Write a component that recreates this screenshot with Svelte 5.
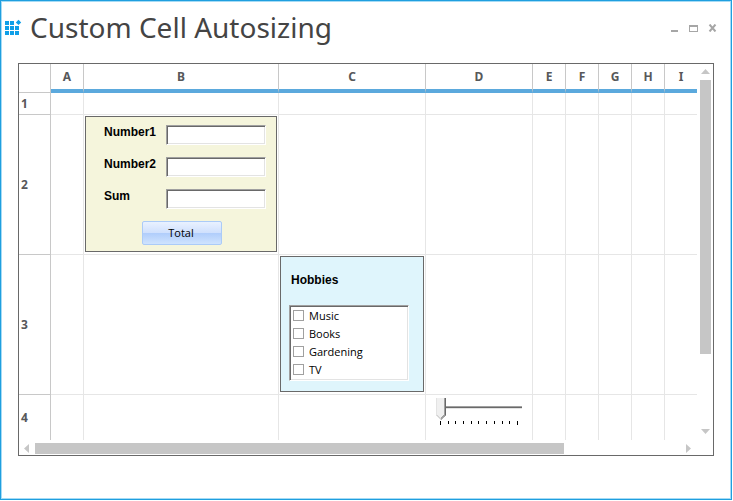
<script>
  const columns = ['A', 'B', 'C', 'D', 'E', 'F', 'G', 'H', 'I'];
  const rows = [1, 2, 3, 4];
  const hobbyNames = ['Music', 'Books', 'Gardening', 'TV'];

  let number1 = $state('');
  let number2 = $state('');
  let sum = $state('');
  let level = $state(0);

  function total() {
    sum = String(Number(number1) + Number(number2));
  }
</script>

<main class="window">
  <header class="titlebar">
    <svg class="logo" width="16" height="16" viewBox="0 0 16 16" aria-hidden="true">
      <g fill="#0f9fe8">
        <rect x="0" y="1" width="4" height="4" /><rect x="5" y="1" width="4" height="4" />
        <rect x="0" y="6" width="4" height="4" /><rect x="5" y="6" width="4" height="4" /><rect x="10" y="6" width="4" height="4" />
        <rect x="0" y="11" width="4" height="4" /><rect x="5" y="11" width="4" height="4" /><rect x="10" y="11" width="4" height="4" />
        <path d="M13.5 -0.3l2.7 2.7l-2.7 2.7l-2.7-2.7z" />
      </g>
    </svg>
    <h1>Custom Cell Autosizing</h1>
    <div class="controls">
      <button aria-label="Minimize">
        <svg width="9" height="8" viewBox="0 0 9 8" shape-rendering="crispEdges"><path d="M1 6h7v2h-7z" fill="#a6a6a6" /></svg>
      </button>
      <button aria-label="Maximize">
        <svg width="9" height="8" viewBox="0 0 9 8" shape-rendering="crispEdges"><path d="M0 1h9v7h-9zM1 3v4h7v-4z" fill="#a6a6a6" fill-rule="evenodd" /></svg>
      </button>
      <button aria-label="Close">
        <svg width="9" height="8" viewBox="0 0 9 8"><path d="M1.5 0.5l6 7M7.5 0.5l-6 7" stroke="#a6a6a6" stroke-width="2" /></svg>
      </button>
    </div>
  </header>

  <section class="sheet">
    <table>
      <colgroup>
        <col class="c-head" />
        {#each columns as c}
          <col class="c-{c}" />
        {/each}
      </colgroup>
      <thead>
        <tr>
          <th class="corner"></th>
          {#each columns as c}
            <th scope="col">{c}</th>
          {/each}
        </tr>
      </thead>
      <tbody>
        {#each rows as r}
          <tr class="r{r}">
            <th scope="row">{r}</th>
            {#each columns as c}
              <td>
                {#if r === 2 && c === 'B'}
                  <div class="panel adder">
                    <div class="fields">
                      <label for="n1">Number1</label><input id="n1" type="text" bind:value={number1} />
                      <label for="n2">Number2</label><input id="n2" type="text" bind:value={number2} />
                      <label for="sum">Sum</label><input id="sum" type="text" bind:value={sum} />
                    </div>
                    <button class="total" onclick={total}>Total</button>
                  </div>
                {:else if r === 3 && c === 'C'}
                  <div class="panel hobbies">
                    <h2>Hobbies</h2>
                    <div class="list">
                      {#each hobbyNames as name}
                        <label><input type="checkbox" />{name}</label>
                      {/each}
                    </div>
                  </div>
                {:else if r === 4 && c === 'D'}
                  <div class="slider">
                    <input type="range" min="0" max="10" bind:value={level} aria-label="Level" />
                    <div class="ticks">
                      {#each Array(11) as _}<i></i>{/each}
                    </div>
                  </div>
                {/if}
              </td>
            {/each}
          </tr>
        {/each}
      </tbody>
    </table>
    <div class="vbar">
      <svg width="9" height="5" viewBox="0 0 9 5" aria-hidden="true"><path d="M0 5l4.5-5l4.5 5z" fill="#c6c6c6" /></svg>
      <div class="track"><div class="thumb"></div></div>
      <svg width="9" height="5" viewBox="0 0 9 5" aria-hidden="true"><path d="M0 0l4.5 5l4.5-5z" fill="#c6c6c6" /></svg>
    </div>
    <div class="hbar">
      <svg width="5" height="9" viewBox="0 0 5 9" aria-hidden="true"><path d="M5 0l-5 4.5l5 4.5z" fill="#c6c6c6" /></svg>
      <div class="track"><div class="thumb"></div></div>
      <svg width="5" height="9" viewBox="0 0 5 9" aria-hidden="true"><path d="M0 0l5 4.5l-5 4.5z" fill="#c6c6c6" /></svg>
    </div>
  </section>
</main>

<style>
  :global(body) {
    background: #fff;
  }

  .window {
    box-sizing: border-box;
    min-height: calc(100vh - 1px);
    margin-right: 1px;
    padding-bottom: 42px;
    border: 1px solid #1f9fdf;
    box-shadow: inset 0 0 0 1px #a5dbf5;
    font-family: "Open Sans", "Noto Sans", sans-serif;
    font-size: 11px;
    color: #000;
  }

  .titlebar {
    display: flex;
    align-items: center;
    height: 54px;
    padding: 0 14px 0 4px;
  }

  .logo {
    flex: none;
    margin-right: 9px;
    overflow: visible;
  }

  h1 {
    flex: 1;
    margin: 0;
    font: 28px/52px "Noto Sans", "Open Sans", sans-serif;
    padding-bottom: 2px;
    color: #444;
    white-space: nowrap;
  }

  .controls {
    display: flex;
    gap: 10px;
  }

  .controls button {
    display: block;
    padding: 0;
    border: 0;
    background: none;
  }

  .controls svg,
  .vbar svg,
  .hbar svg {
    display: block;
    flex: none;
  }

  .sheet {
    display: grid;
    grid-template-columns: 1fr 16px;
    margin: 8px 17px 0;
    border: 1px solid #696969;
  }

  table {
    width: 100%;
    table-layout: fixed;
    border-collapse: separate;
    border-spacing: 0;
  }

  .c-head { width: 32px; }
  .c-B { width: 195px; }
  .c-C { width: 147px; }
  .c-D { width: 107px; }
  .c-A, .c-E, .c-F, .c-G, .c-H { width: 33px; }

  th,
  td {
    box-sizing: border-box;
    padding: 0;
    border: 0 solid #e6e6e6;
    border-width: 0 1px 1px 0;
    vertical-align: top;
  }

  tr > :last-child {
    border-right: 0;
  }

  tbody tr:last-child > * {
    border-bottom: 0;
  }

  th {
    font: bold 12px/16px "Noto Sans", sans-serif;
    color: #57585a;
    border-color: #c8c8c8;
  }

  thead th {
    height: 29px;
    border-bottom: 4px solid #5ba9dd;
    vertical-align: middle;
  }

  thead .corner {
    border-bottom: 1px solid #c8c8c8;
  }

  tbody th {
    padding-left: 2px;
    text-align: left;
    vertical-align: middle;
  }

  .r1 > * { height: 22px; }
  .r2 > *, .r3 > * { height: 140px; }
  .r4 > * { height: 45px; }

  .panel {
    box-sizing: border-box;
    height: 136px;
    margin: 1px;
    border: 1px solid #696969;
  }

  .adder {
    padding: 8px 10px 0 18px;
    background: #f5f5dc;
  }

  .fields {
    display: grid;
    grid-template-columns: 62px 100px;
    row-gap: 12px;
  }

  .fields label,
  h2 {
    margin: 0;
    font: bold 12px/14px "Liberation Sans", sans-serif;
  }

  .fields input,
  .list {
    box-sizing: border-box;
    border: 1px solid;
    border-color: #a0a0a0 #fff #fff #a0a0a0;
    background: #fff;
    box-shadow: inset 1px 1px #696969, inset -1px -1px #e3e3e3;
  }

  .fields input {
    width: 100%;
    height: 20px;
    padding: 2px 4px;
    font: 11px "Open Sans", sans-serif;
  }

  .total {
    display: block;
    width: 80px;
    height: 24px;
    margin: 12px 0 0 38px;
    padding: 0 2px 2px 0;
    border: 1px solid #abcbf8;
    border-radius: 2px;
    background: linear-gradient(#e9f1ff, #cfe0fd 50%, #b0cdfb 51%, #cfe3fe);
    font: 11px "Open Sans", sans-serif;
    color: #000;
  }

  .hobbies {
    padding: 16px 14px 0 8px;
    background: #dff5fc;
  }

  h2 {
    padding-left: 2px;
  }

  .list {
    width: 120px;
    height: 76px;
    margin-top: 18px;
    padding: 0 3px;
  }

  .list label {
    display: flex;
    align-items: center;
    gap: 5px;
    height: 18px;
  }

  .list input {
    appearance: none;
    box-sizing: border-box;
    width: 11px;
    height: 11px;
    margin: 0;
    border: 1px solid #a0a0a0;
    background: #fff;
  }

  .list input:checked {
    background: #696969;
  }

  .slider {
    width: 88px;
    padding: 3px 0 0 10px;
  }

  .slider input {
    appearance: none;
    display: block;
    width: 100%;
    height: 22px;
    margin: 0;
    background: none;
  }

  .slider input::-webkit-slider-runnable-track {
    height: 22px;
    background: linear-gradient(#a0a0a0 0 1px, #696969 1px 2px, #e3e3e3 2px 3px) 0 8px / 86px 3px no-repeat;
  }

  .slider input::-webkit-slider-thumb {
    appearance: none;
    width: 10px;
    height: 22px;
    clip-path: polygon(0 0, 10px 0, 10px 17px, 5px 22px, 0 17px);
    background:
      linear-gradient(135deg, #f0f0f0 0 2px, #a0a0a0 2px 3px, #696969 3px) 5px 17px / 5px 5px no-repeat,
      linear-gradient(45deg, #c8c8c8 0 4px, #f0f0f0 5px) 0 17px / 5px 5px no-repeat,
      linear-gradient(90deg, #e3e3e3 0 1px, #f0f0f0 1px 8px, #a0a0a0 8px 9px, #696969 9px);
  }

  .ticks {
    display: flex;
    justify-content: space-between;
    width: 78px;
    padding: 1px 0 0 4px;
  }

  .ticks i {
    width: 1px;
    height: 3px;
    background: #000;
  }

  .ticks i:first-child,
  .ticks i:last-child {
    height: 4px;
  }

  .vbar {
    display: flex;
    flex-direction: column;
    align-items: center;
    gap: 6px;
    padding: 5px 0 6px 1px;
  }

  .vbar .track {
    flex: 1;
    width: 11px;
  }

  .vbar .thumb {
    height: 80%;
    background: #c6c6c6;
  }

  .hbar {
    display: flex;
    align-items: center;
    gap: 6px;
    height: 11px;
    padding: 3px 6px 1px 5px;
  }

  .hbar .track {
    flex: 1;
    height: 11px;
  }

  .hbar .thumb {
    width: 82%;
    height: 11px;
    background: #c6c6c6;
  }
</style>
